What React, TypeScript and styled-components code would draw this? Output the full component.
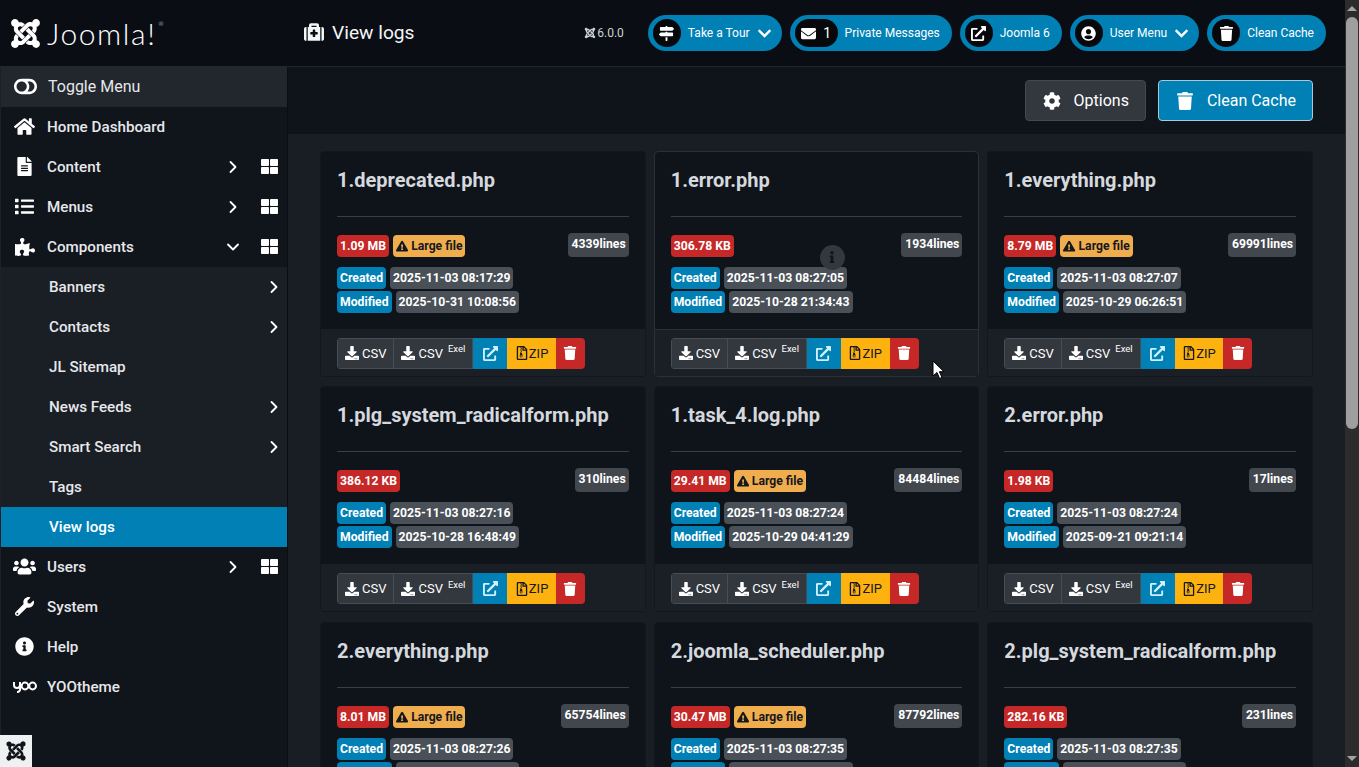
import React from "react";
import styled, { createGlobalStyle } from "styled-components";
import { ChevronDown, ChevronRight } from "lucide-react";
import {
  FaChevronDown,
  FaCog,
  FaDownload,
  FaEnvelope,
  FaExclamationTriangle,
  FaExternalLinkAlt,
  FaFileAlt,
  FaHome,
  FaInfo,
  FaInfoCircle,
  FaJoomla,
  FaList,
  FaMapSigns,
  FaMedkit,
  FaPuzzlePiece,
  FaRegFileArchive,
  FaThLarge,
  FaToggleOff,
  FaTrash,
  FaUserCircle,
  FaUsers,
  FaWrench,
} from "react-icons/fa";

const GlobalStyle = createGlobalStyle`
  html, body {
    margin: 0;
    height: 100%;
    overflow: hidden;
    background: #191d24;
    font-family: Roboto, "Liberation Sans", sans-serif;
  }
  * { box-sizing: border-box; }
`;

const Page = styled.div`
  display: flex;
  width: 1359px;
  height: 767px;
  overflow: hidden;
  position: relative;
`;

const Main = styled.div`
  flex: 1;
  min-width: 0;
  display: flex;
  flex-direction: column;
`;

const Header = styled.header`
  height: 67px;
  flex: none;
  display: flex;
  align-items: center;
  background: #0a0d13;
  border-bottom: 1px solid #22262d;
  color: #fff;
`;

const Brand = styled.div`
  width: 288px;
  padding-left: 9px;
  display: flex;
  align-items: center;
  gap: 5px;
  font-family: Lato, sans-serif;
  font-weight: 300;
  font-size: 30px;
  letter-spacing: 1.6px;
  sup {
    font-size: 6px;
    letter-spacing: 0;
    align-self: flex-start;
    margin: 5px 0 0 -3px;
  }
`;

const PageTitle = styled.div`
  flex: 1;
  padding: 0 0 2px 16px;
  display: flex;
  align-items: center;
  gap: 8px;
  font-size: 19.2px;
  color: #f4f6f8;
  svg {
    font-size: 20px;
  }
`;

const Version = styled.div`
  display: flex;
  align-items: center;
  gap: 1px;
  font-size: 12px;
  color: #cfd3d8;
  margin-right: 24px;
`;

const HeaderActions = styled.div`
  display: flex;
  gap: 8px;
  margin-right: 19px;
`;

const Pill = styled.div`
  height: 36px;
  padding: 0 12px 0 5px;
  display: flex;
  align-items: center;
  gap: 7px;
  background: #0080b5;
  border-radius: 18px;
  font-size: 12px;
  color: #fff;
  svg.caret {
    font-size: 15px;
    margin-right: -2px;
  }
`;

const PillIcon = styled.span<{ $wide?: boolean }>`
  width: ${(p) => (p.$wide ? "43px" : "28px")};
  height: 28px;
  border-radius: 14px;
  background: #06080c;
  display: flex;
  align-items: center;
  justify-content: center;
  gap: 7px;
  font-size: 14px;
  svg {
    font-size: 15px;
  }
`;

const Body = styled.div`
  flex: 1;
  min-height: 0;
  display: flex;
`;

const Sidebar = styled.nav`
  width: 288px;
  flex: none;
  background: #10141b;
  border-left: 1px solid #1c2027;
  border-right: 1px solid #0a0d13;
`;

const MenuRow = styled.div<{ $sub?: boolean; $active?: boolean; $toggle?: boolean }>`
  height: 40px;
  display: flex;
  align-items: center;
  padding-left: ${(p) => (p.$sub ? "48px" : p.$toggle ? "12px" : "11px")};
  padding-bottom: ${(p) => (p.$toggle ? "2px" : "1px")};
  font-size: ${(p) => (p.$toggle ? "16px" : "15.2px")};
  font-weight: ${(p) => (p.$toggle ? 400 : 500)};
  color: ${(p) => (p.$active ? "#fff" : "#e6e8eb")};
  background: ${(p) =>
    p.$active ? "#0080b5" : p.$toggle ? "#22262d" : p.$sub ? "#1a1e25" : "transparent"};
`;

const MenuIcon = styled.span<{ $size: number }>`
  width: 35px;
  flex: none;
  display: flex;
  justify-content: center;
  font-size: ${(p) => p.$size}px;
  color: #fff;
  transform: translateX(-5px);
`;

const MenuLabel = styled.span`
  flex: 1;
`;

const MenuArrow = styled.span<{ $sub?: boolean }>`
  width: 20px;
  display: flex;
  justify-content: center;
  color: #fff;
  margin-right: ${(p) => (p.$sub ? "3px" : "17px")};
`;

const MenuGrid = styled.span`
  width: 18px;
  display: flex;
  justify-content: center;
  font-size: 17px;
  color: #fff;
  margin-right: 9px;
`;

const YooMark = styled.svg`
  display: block;
`;

const Content = styled.main`
  flex: 1;
  min-width: 0;
  display: flex;
  flex-direction: column;
  background: #191d24;
`;

const Toolbar = styled.div`
  height: 67px;
  flex: none;
  display: flex;
  align-items: center;
  justify-content: flex-end;
  gap: 12px;
  padding: 0 32px 0 0;
  background: #0f131a;
`;

const ToolbarButton = styled.div<{ $primary?: boolean }>`
  height: 41px;
  display: flex;
  align-items: center;
  gap: 13px;
  padding: 0 16px 0 17px;
  border-radius: 4px;
  font-size: 16px;
  color: #fff;
  background: ${(p) => (p.$primary ? "#0080b5" : "#33373e")};
  border: 1px solid ${(p) => (p.$primary ? "#a9c9dc" : "#44484f")};
  svg {
    font-size: 18px;
  }
`;

const CardGrid = styled.div`
  display: grid;
  grid-template-columns: repeat(3, 1fr);
  grid-auto-rows: 226px;
  column-gap: 8px;
  row-gap: 9.5px;
  padding: 16.6px 32px 0;
`;

const Card = styled.article<{ $hover?: boolean }>`
  position: relative;
  display: flex;
  flex-direction: column;
  background: #0f131a;
  border: 1px solid ${(p) => (p.$hover ? "#2b2f36" : "#12161d")};
  border-radius: 4px;
`;

const CardBody = styled.div`
  height: 177px;
  flex: none;
  padding: 0 16px;
`;

const CardTitle = styled.h3`
  height: 65px;
  margin: 0;
  padding-top: 14px;
  font-size: 20px;
  line-height: 29px;
  font-weight: 700;
  color: #d5d9de;
  border-bottom: 1px solid #3a3e45;
`;

const SizeRow = styled.div`
  display: flex;
  justify-content: space-between;
  align-items: flex-start;
  margin-top: 16px;
`;

const Badges = styled.div`
  display: flex;
  gap: 4px;
  margin-top: 2px;
`;

const Badge = styled.span<{ $kind: "red" | "amber" | "blue" | "gray" }>`
  height: 22px;
  display: inline-flex;
  align-items: center;
  gap: 3px;
  padding: 0 3px;
  border-radius: 4px;
  font-size: 12.2px;
  font-weight: 700;
  white-space: nowrap;
  color: ${(p) => (p.$kind === "amber" ? "#15181d" : "#fff")};
  background: ${(p) =>
    ({ red: "#c52827", amber: "#f0ad4e", blue: "#0080b5", gray: "#495057" })[p.$kind]};
`;

const LinesBadge = styled(Badge)`
  height: 24px;
  padding: 0 3px 2px 4px;
  background: #42464d;
`;

const DateRow = styled.div`
  display: flex;
  gap: 4px;
`;

const DateRows = styled.div`
  margin-top: 10px;
  display: flex;
  flex-direction: column;
  gap: 2px;
`;

const CardFooter = styled.div<{ $hover?: boolean }>`
  flex: 1;
  padding: 8px 16px 0;
  background: #1a1e25;
  border-top: 1px solid ${(p) => (p.$hover ? "#2b2f36" : "transparent")};
`;

const ButtonGroup = styled.div`
  display: inline-flex;
  height: 31px;
  border-radius: 4px;
  overflow: hidden;
`;

const GroupButton = styled.span<{ $kind?: "blue" | "yellow" | "red" }>`
  display: flex;
  align-items: center;
  gap: ${(p) => (p.$kind === "yellow" ? "0" : "3px")};
  padding: 0 ${(p) => (p.$kind === "blue" ? "9.5px" : p.$kind ? "7.5px" : "7px")};
  font-size: 13px;
  color: ${(p) => (p.$kind === "yellow" ? "#15181d" : p.$kind === "blue" ? "#cff1fb" : "#fff")};
  background: ${(p) =>
    p.$kind === "blue"
      ? "#0080b5"
      : p.$kind === "yellow"
        ? "#fdb20f"
        : p.$kind === "red"
          ? "#c52827"
          : "#33373e"};
  border: ${(p) => (p.$kind ? "none" : "1px solid #484c53")};
  & + & {
    border-left: ${(p) => (p.$kind ? "none" : "0")};
  }
  sup {
    font-size: 9.5px;
    margin-left: 2px;
    line-height: 1;
    transform: translateY(-4px);
  }
  svg {
    font-size: ${(p) => (p.$kind === "blue" ? "15px" : "14px")};
  }
`;

const HoverInfo = styled.span`
  position: absolute;
  left: 165px;
  top: 93px;
  width: 25px;
  height: 25px;
  border-radius: 50%;
  background: #33373e;
  color: #10141b;
  display: flex;
  align-items: center;
  justify-content: center;
  font-size: 12px;
`;

const Pointer = styled.svg`
  position: absolute;
  left: 932px;
  top: 360px;
`;

const CornerLogo = styled.div`
  position: absolute;
  left: 0;
  bottom: 0;
  width: 32px;
  height: 32px;
  background: #eef0f2;
  color: #10141b;
  display: flex;
  align-items: center;
  justify-content: center;
  font-size: 22px;
`;

const Scrollbar = styled.div`
  width: 14px;
  flex: none;
  display: flex;
  flex-direction: column;
  align-items: center;
  background: #2c2c2c;
`;

const ScrollArrow = styled.span<{ $down?: boolean }>`
  height: 17px;
  flex: none;
  display: flex;
  align-items: center;
  justify-content: center;
  &::before {
    content: "";
    border-left: 5px solid transparent;
    border-right: 5px solid transparent;
    ${(p) => (p.$down ? "border-top" : "border-bottom")}: 5px solid #a3a3a3;
  }
`;

const ScrollTrack = styled.div`
  flex: 1;
  width: 100%;
`;

const ScrollThumb = styled.div`
  height: 412px;
  margin: 0 1px;
  border-radius: 6px;
  background: #9f9f9f;
`;

interface LogFile {
  name: string;
  size: string;
  large?: boolean;
  lines: number;
  created: string;
  modified: string;
  hover?: boolean;
}

const logs: LogFile[] = [
  { name: "1.deprecated.php", size: "1.09 MB", large: true, lines: 4339, created: "2025-11-03 08:17:29", modified: "2025-10-31 10:08:56" },
  { name: "1.error.php", size: "306.78 KB", lines: 1934, created: "2025-11-03 08:27:05", modified: "2025-10-28 21:34:43", hover: true },
  { name: "1.everything.php", size: "8.79 MB", large: true, lines: 69991, created: "2025-11-03 08:27:07", modified: "2025-10-29 06:26:51" },
  { name: "1.plg_system_radicalform.php", size: "386.12 KB", lines: 310, created: "2025-11-03 08:27:16", modified: "2025-10-28 16:48:49" },
  { name: "1.task_4.log.php", size: "29.41 MB", large: true, lines: 84484, created: "2025-11-03 08:27:24", modified: "2025-10-29 04:41:29" },
  { name: "2.error.php", size: "1.98 KB", lines: 17, created: "2025-11-03 08:27:24", modified: "2025-09-21 09:21:14" },
  { name: "2.everything.php", size: "8.01 MB", large: true, lines: 65754, created: "2025-11-03 08:27:26", modified: "2025-10-29 06:26:51" },
  { name: "2.joomla_scheduler.php", size: "30.47 MB", large: true, lines: 87792, created: "2025-11-03 08:27:35", modified: "2025-10-29 04:41:29" },
  { name: "2.plg_system_radicalform.php", size: "282.16 KB", lines: 231, created: "2025-11-03 08:27:35", modified: "2025-10-28 16:48:49" },
];

const YooIcon = () => (
  <YooMark width="24" height="14" viewBox="0 0 24 14" fill="none" stroke="#fff" strokeWidth="2">
    <path d="M1 2v3a3 3 0 0 0 6 0V2M7 5v3a3 3 0 0 1-3 4" />
    <circle cx="12" cy="6" r="3.4" />
    <circle cx="19.6" cy="6" r="3.4" />
  </YooMark>
);

interface MenuItem {
  label: string;
  icon?: React.ReactNode;
  iconSize?: number;
  sub?: boolean;
  active?: boolean;
  toggle?: boolean;
  arrow?: "right" | "down";
  grid?: boolean;
}

const menu: MenuItem[] = [
  { label: "Toggle Menu", icon: <FaToggleOff />, iconSize: 23, toggle: true },
  { label: "Home Dashboard", icon: <FaHome />, iconSize: 21 },
  { label: "Content", icon: <FaFileAlt />, iconSize: 19, arrow: "right", grid: true },
  { label: "Menus", icon: <FaList />, iconSize: 19, arrow: "right", grid: true },
  { label: "Components", icon: <FaPuzzlePiece />, iconSize: 20, arrow: "down", grid: true },
  { label: "Banners", sub: true, arrow: "right" },
  { label: "Contacts", sub: true, arrow: "right" },
  { label: "JL Sitemap", sub: true },
  { label: "News Feeds", sub: true, arrow: "right" },
  { label: "Smart Search", sub: true, arrow: "right" },
  { label: "Tags", sub: true },
  { label: "View logs", sub: true, active: true },
  { label: "Users", icon: <FaUsers />, iconSize: 23, arrow: "right", grid: true },
  { label: "System", icon: <FaWrench />, iconSize: 19 },
  { label: "Help", icon: <FaInfoCircle />, iconSize: 19 },
  { label: "YOOtheme", icon: <YooIcon />, iconSize: 20 },
];

const LogCard = ({ log }: { log: LogFile }) => (
  <Card $hover={log.hover}>
    <CardBody>
      <CardTitle>{log.name}</CardTitle>
      <SizeRow>
        <Badges>
          <Badge $kind="red">{log.size}</Badge>
          {log.large && (
            <Badge $kind="amber">
              <FaExclamationTriangle />
              Large file
            </Badge>
          )}
        </Badges>
        <LinesBadge $kind="gray">{log.lines}lines</LinesBadge>
      </SizeRow>
      <DateRows>
        <DateRow>
          <Badge $kind="blue">Created</Badge>
          <Badge $kind="gray">{log.created}</Badge>
        </DateRow>
        <DateRow>
          <Badge $kind="blue">Modified</Badge>
          <Badge $kind="gray">{log.modified}</Badge>
        </DateRow>
      </DateRows>
    </CardBody>
    <CardFooter $hover={log.hover}>
      <ButtonGroup>
        <GroupButton>
          <FaDownload />
          CSV
        </GroupButton>
        <GroupButton>
          <FaDownload />
          CSV<sup>Exel</sup>
        </GroupButton>
        <GroupButton $kind="blue">
          <FaExternalLinkAlt />
        </GroupButton>
        <GroupButton $kind="yellow">
          <FaRegFileArchive />
          ZIP
        </GroupButton>
        <GroupButton $kind="red">
          <FaTrash />
        </GroupButton>
      </ButtonGroup>
    </CardFooter>
    {log.hover && (
      <HoverInfo>
        <FaInfo />
      </HoverInfo>
    )}
  </Card>
);

const App = () => {
  return (
    <Page>
      <GlobalStyle />
      <Main>
        <Header>
          <Brand>
            <FaJoomla size={33} />
            <span>Joomla!</span>
            <sup>®</sup>
          </Brand>
          <PageTitle>
            <FaMedkit />
            View logs
          </PageTitle>
          <Version>
            <FaJoomla size={12} /> 6.0.0
          </Version>
          <HeaderActions>
            <Pill>
              <PillIcon>
                <FaMapSigns />
              </PillIcon>
              Take a Tour
              <FaChevronDown className="caret" />
            </Pill>
            <Pill>
              <PillIcon $wide>
                <FaEnvelope />1
              </PillIcon>
              Private Messages
            </Pill>
            <Pill>
              <PillIcon>
                <FaExternalLinkAlt />
              </PillIcon>
              Joomla 6
            </Pill>
            <Pill>
              <PillIcon>
                <FaUserCircle />
              </PillIcon>
              User Menu
              <FaChevronDown className="caret" />
            </Pill>
            <Pill>
              <PillIcon>
                <FaTrash />
              </PillIcon>
              Clean Cache
            </Pill>
          </HeaderActions>
        </Header>
        <Body>
          <Sidebar>
            {menu.map((item) => (
              <MenuRow key={item.label} $sub={item.sub} $active={item.active} $toggle={item.toggle}>
                {item.icon && <MenuIcon $size={item.iconSize ?? 20}>{item.icon}</MenuIcon>}
                <MenuLabel>{item.label}</MenuLabel>
                {item.arrow && (
                  <MenuArrow $sub={item.sub}>
                    {item.arrow === "right" ? (
                      <ChevronRight size={28} strokeWidth={2.2} />
                    ) : (
                      <ChevronDown size={28} strokeWidth={2.2} />
                    )}
                  </MenuArrow>
                )}
                {item.grid && (
                  <MenuGrid>
                    <FaThLarge />
                  </MenuGrid>
                )}
              </MenuRow>
            ))}
          </Sidebar>
          <Content>
            <Toolbar>
              <ToolbarButton>
                <FaCog />
                Options
              </ToolbarButton>
              <ToolbarButton $primary>
                <FaTrash />
                Clean Cache
              </ToolbarButton>
            </Toolbar>
            <CardGrid>
              {logs.map((log) => (
                <LogCard key={log.name} log={log} />
              ))}
            </CardGrid>
          </Content>
        </Body>
      </Main>
      <Scrollbar>
        <ScrollArrow />
        <ScrollTrack>
          <ScrollThumb />
        </ScrollTrack>
        <ScrollArrow $down />
      </Scrollbar>
      <CornerLogo>
        <FaJoomla />
      </CornerLogo>
      <Pointer width="12" height="20" viewBox="0 0 12 20">
        <path d="M1 1v15l4-3.5 2.6 6 2.4-1-2.6-5.8H12z" fill="#fff" stroke="#000" strokeWidth="1" />
      </Pointer>
    </Page>
  );
};

export default App;
